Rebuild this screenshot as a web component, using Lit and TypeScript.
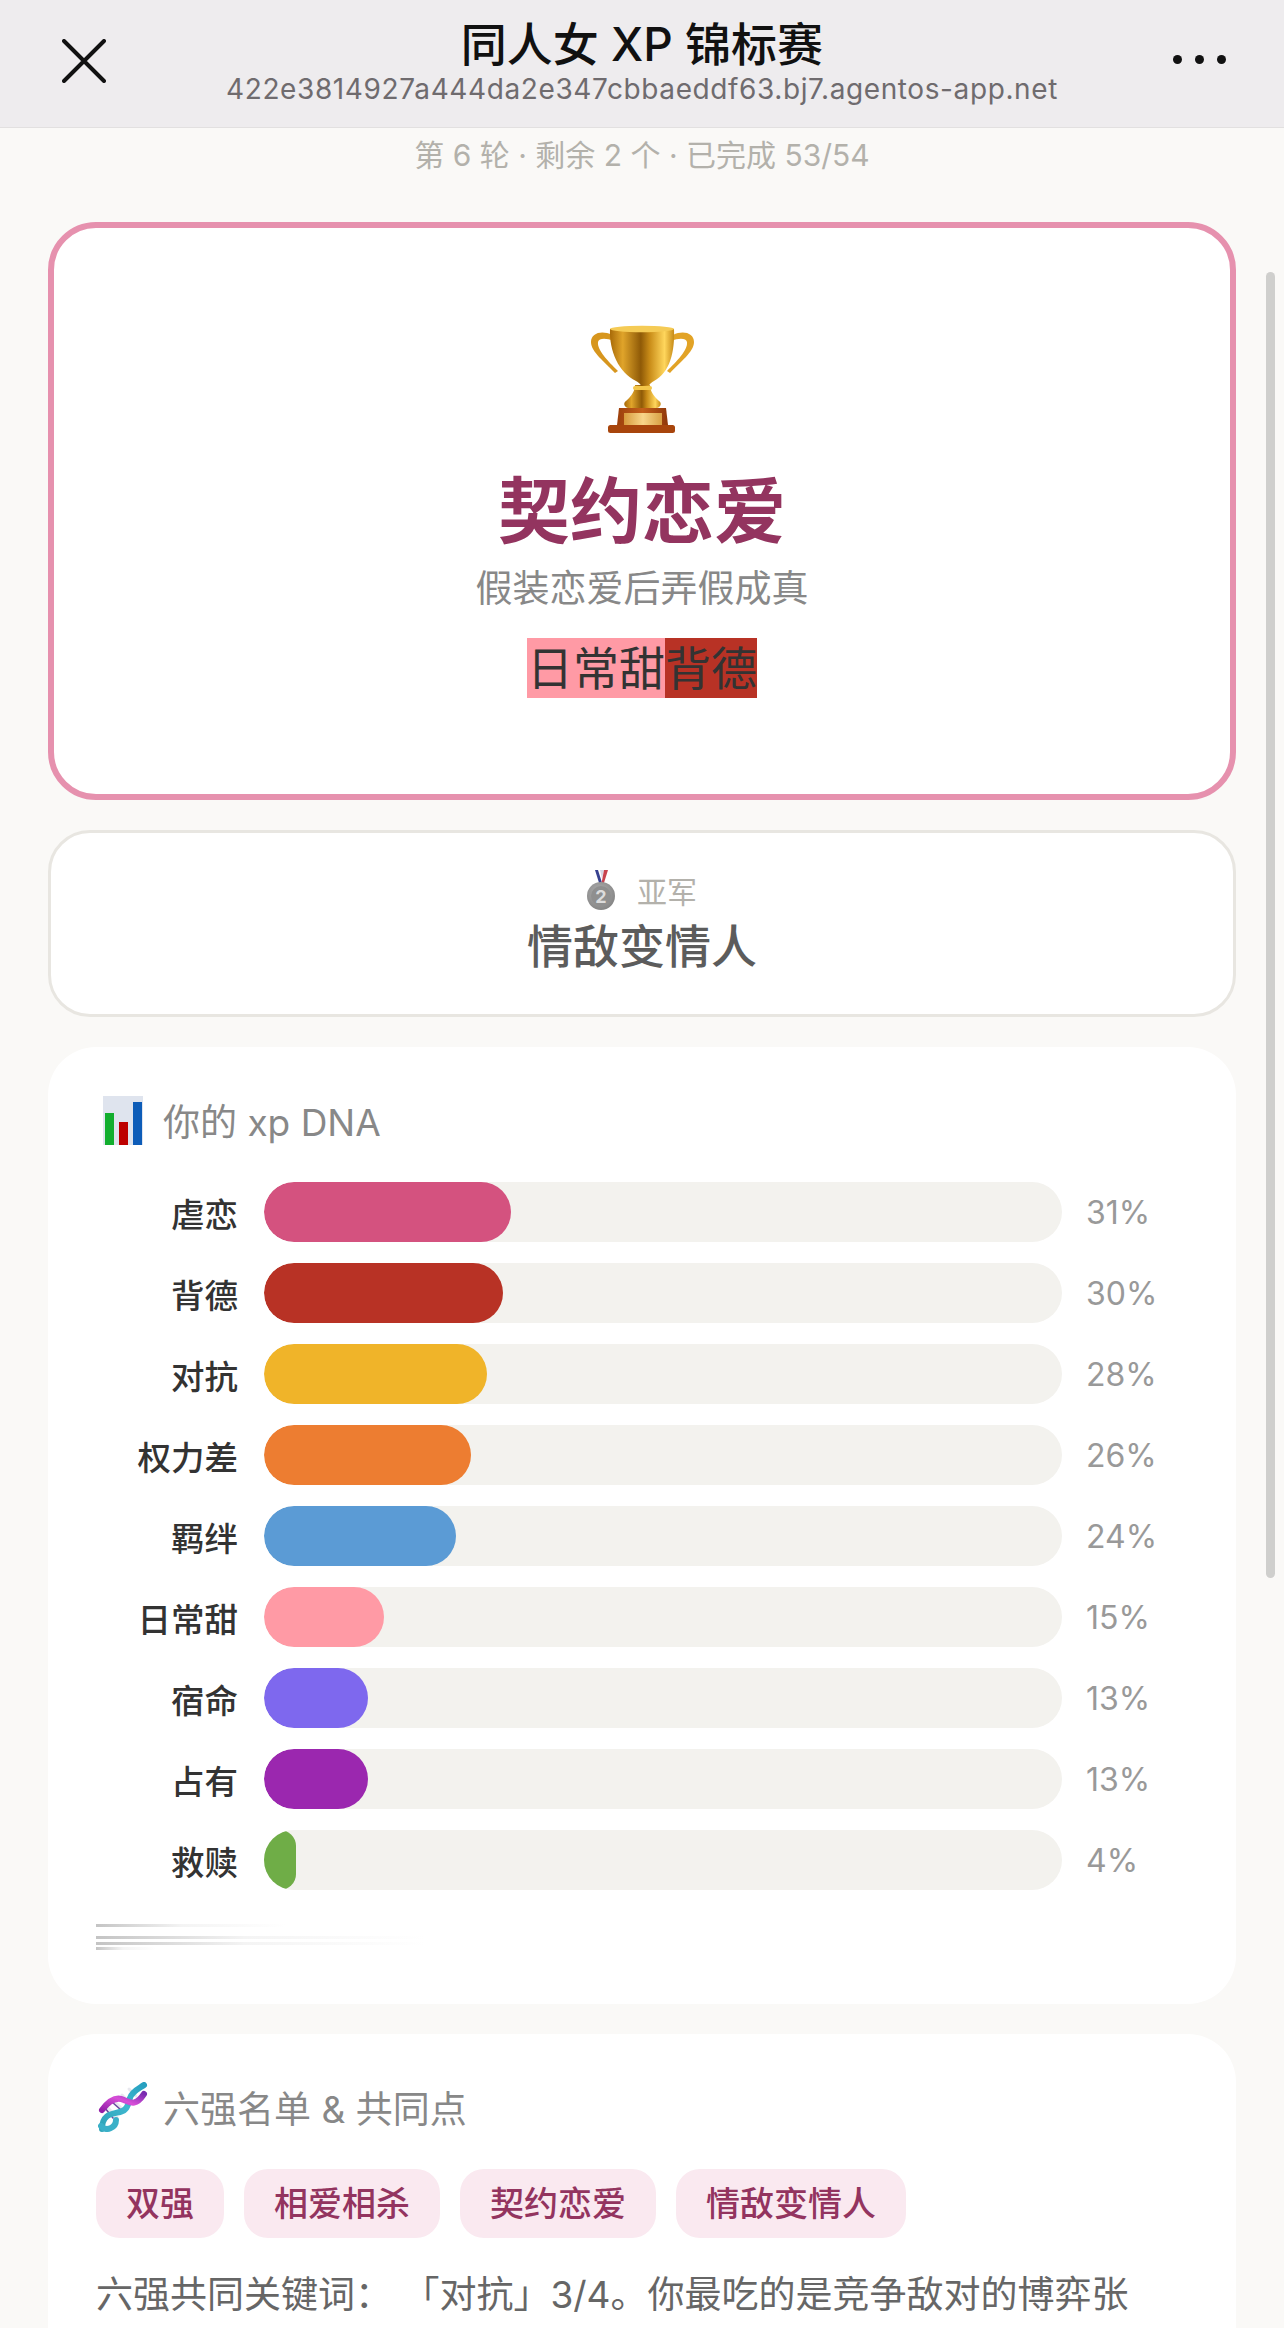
import { LitElement, html, css, svg } from "lit";
import { customElement } from "lit/decorators.js";

const BARS = [
  { label: "虐恋", pct: 31, color: "#d4527f" },
  { label: "背德", pct: 30, color: "#b83225" },
  { label: "对抗", pct: 28, color: "#f0b429" },
  { label: "权力差", pct: 26, color: "#ed7d31" },
  { label: "羁绊", pct: 24, color: "#5b9bd5" },
  { label: "日常甜", pct: 15, color: "#ff9aa5" },
  { label: "宿命", pct: 13, color: "#7e68ee" },
  { label: "占有", pct: 13, color: "#9b27af" },
  { label: "救赎", pct: 4, color: "#6fad47" },
];
const CHIPS = ["双强", "相爱相杀", "契约恋爱", "情敌变情人"];

const trophy = html`<svg class="trophy" viewBox="0 0 105 108" width="105" height="108">
  <defs>
    <linearGradient id="cup" x1="0" x2="1" y1="0" y2="0">
      <stop offset="0" stop-color="#a86a08"/><stop offset=".2" stop-color="#e0a42a"/>
      <stop offset=".48" stop-color="#8f5a07"/><stop offset=".62" stop-color="#c98c18"/>
      <stop offset=".85" stop-color="#ffd65c"/><stop offset="1" stop-color="#c68a17"/>
    </linearGradient>
    <linearGradient id="base" x1="0" x2="1" y1="0" y2="0">
      <stop offset="0" stop-color="#9c3f0c"/><stop offset=".5" stop-color="#c4601a"/><stop offset="1" stop-color="#8f370a"/>
    </linearGradient>
    <linearGradient id="plate" x1="0" x2="1" y1="0" y2="0">
      <stop offset="0" stop-color="#d79a3c"/><stop offset=".5" stop-color="#f8d68a"/><stop offset="1" stop-color="#d8a044"/>
    </linearGradient>
  </defs>
  <path d="M22 10C12 5 1 8 1 17c0 10 14 20 24 31l3-2C18 36 7 25 8 17c1-4 8-4 16-1z" fill="#d7961e"/>
  <path d="M83 10c10-5 21-2 21 7 0 10-14 20-24 31l-3-2c10-10 21-21 20-29-1-4-8-4-16-1z" fill="#e2a326"/>
  <path d="M20 4h64c1 22-4 44-20 52-5 3-5 4-5 6h-8c0-2 0-3-5-6C29 48 19 26 20 4z" fill="url(#cup)"/>
  <ellipse cx="52" cy="4" rx="32" ry="3.2" fill="#f5cb55"/>
  <path d="M45 60h15c0 5 3 11 9 16 3 2 2 6-2 7H38c-4-1-5-5-2-7 6-5 9-11 9-16z" fill="url(#cup)"/>
  <rect x="43" y="61" width="19" height="4" rx="2" fill="#f3c64a"/>
  <path d="M29 83h47l2 17H27z" fill="url(#base)"/>
  <rect x="34" y="88" width="38" height="12" fill="url(#plate)"/>
  <rect x="18" y="100" width="67" height="8" rx="2.5" fill="#a8450c"/>
</svg>`;

const medal = html`<svg class="medal" viewBox="0 0 28 40" width="28" height="40">
  <defs><radialGradient id="silver" cx=".45" cy=".4" r=".7"><stop offset="0" stop-color="#b5b5b5"/><stop offset="1" stop-color="#7d7d7d"/></radialGradient></defs>
  <path d="M8 0l5 16h3L11 0z" fill="#37418f"/>
  <path d="M13 0l2 9 2-9z" fill="#d6d6e4"/>
  <path d="M21 0l-5 16h-2l3-16z" fill="#c8434e"/>
  <circle cx="14" cy="26" r="14" fill="url(#silver)"/>
  <circle cx="14" cy="26" r="10" fill="#8f8f8f"/>
  <text x="14" y="33" text-anchor="middle" class="mtext">2</text>
</svg>`;

const chart = html`<svg viewBox="0 0 40 49" width="40" height="49">
  <rect width="40" height="49" fill="#dfe4ee"/>
  <rect x="2" y="17" width="9" height="32" fill="#12ae2e"/>
  <rect x="16" y="26" width="9" height="23" fill="#bd0000"/>
  <rect x="30" y="6" width="9" height="43" fill="#0d5cb8"/>
</svg>`;

const dna = html`<svg viewBox="0 0 50 50" width="50" height="50">
  <defs>
    <linearGradient id="d1" x1="0" x2="1" y1="1" y2="0"><stop offset="0" stop-color="#2ea4b8"/><stop offset=".55" stop-color="#3fb7cf"/><stop offset="1" stop-color="#27a0c0"/></linearGradient>
    <linearGradient id="d2" x1="0" x2="1" y1="1" y2="0"><stop offset="0" stop-color="#9420a8"/><stop offset=".55" stop-color="#d84fd8"/><stop offset="1" stop-color="#7a2cb0"/></linearGradient>
  </defs>
  ${svg`<g stroke-linecap="round">
    <path d="M10 26l9 9M16 19l9 9M24 13l8 8M31 7l7 7" stroke="#e8e8ee" stroke-width="3"/>
    <path d="M7 26l8 10M14 20l9 8" stroke="#6a4aa0" stroke-width="1.6"/>
    <path d="M4 47C4 32 14 32 22 30 30 28 30 22 32 16 34 9 42 6 46 3" fill="none" stroke="url(#d1)" stroke-width="6"/>
    <path d="M4 28C10 20 18 14 26 18 33 21 38 24 46 12" fill="none" stroke="url(#d2)" stroke-width="6"/>
    <path d="M3 44C8 50 18 46 18 38" fill="none" stroke="#3ab0c8" stroke-width="6"/>
  </g>`}
</svg>`;

@customElement("app-root")
export class AppRoot extends LitElement {
  static styles = css`
    :host {
      display: block;
      position: relative;
      width: 1284px;
      height: 2328px;
      overflow: hidden;
      background: #faf9f7;
      font-family: Inter, "Noto Sans CJK SC", sans-serif;
      color: #333;
    }
    .nav {
      display: grid;
      grid-template-columns: 1fr auto 1fr;
      height: 127px;
      box-sizing: content-box;
      background: #eeecee;
      border-bottom: 1px solid #e2e0e0;
    }
    .close { padding: 39px 0 0 62px; }
    .more { display: flex; justify-content: flex-end; gap: 13px; padding: 55px 58px 0 0; }
    .dot { width: 9px; height: 9px; border-radius: 50%; background: #111; }
    .titles { text-align: center; padding-top: 16px; }
    .title { font-size: 46px; line-height: 56px; font-weight: 500; color: #111; }
    .url { font-size: 28px; line-height: 34px; color: #6f6b6e; letter-spacing: 0.6px; white-space: nowrap; }
    .status {
      text-align: center;
      font-size: 30px;
      line-height: 42px;
      padding-top: 6px;
      color: #b3b1ab;
      margin-bottom: 46px;
    }
    main { display: flex; flex-direction: column; gap: 30px; padding: 0 48px; }
    .hero {
      box-sizing: border-box;
      height: 578px;
      background: #fff;
      border: 6px solid #e691ae;
      border-radius: 48px;
      display: flex;
      flex-direction: column;
      align-items: center;
      padding-top: 97px;
    }
    .trophy { display: block; }
    .champ { font-size: 72px; line-height: 86px; font-weight: 700; color: #93345f; margin-top: 35px; }
    .desc { font-size: 37px; line-height: 50px; color: #888; margin-top: 10px; }
    .tags { display: flex; margin-top: 24px; font-size: 46px; line-height: 60px; color: #333; }
    .tag-a { background: #ff9aa5; }
    .tag-b { background: #b83225; }
    .runner {
      box-sizing: border-box;
      height: 187px;
      background: #fff;
      border: 3px solid #e8e6e1;
      border-radius: 42px;
      display: flex;
      flex-direction: column;
      align-items: center;
      padding-top: 37px;
    }
    .runner-top { display: flex; align-items: center; gap: 22px; height: 40px; font-size: 30px; color: #b3b1ab; }
    .medal { display: block; }
    .mtext { font: 700 18px Inter, sans-serif; fill: #dcdcdc; }
    .runner-name { font-size: 46px; line-height: 62px; font-weight: 500; color: #5c5c5c; margin-top: 5px; }
    .card { background: #fff; border-radius: 48px; padding: 48px; }
    .card.dna { box-sizing: border-box; height: 957px; }
    .heading { display: flex; align-items: center; gap: 13px; height: 50px; font-size: 37px; color: #888; margin-bottom: 37px; }
    .heading .ico { width: 54px; display: flex; justify-content: center; }
    .rows { display: flex; flex-direction: column; gap: 21px; }
    .row { display: grid; grid-template-columns: 142px 798px 1fr; column-gap: 26px; align-items: center; height: 60px; }
    .label { text-align: right; font-size: 33.5px; font-weight: 500; color: #333; }
    .track { height: 60px; background: #f3f2ee; border-radius: 30px; overflow: hidden; }
    .fill { height: 100%; border-radius: 30px; }
    .pct { font-size: 32px; color: #999; margin-left: -2px; }
    .fade { display: flex; flex-direction: column; margin-top: 34px; }
    .fade i { display: block; height: 3px; background: linear-gradient(90deg, #c4c4c4, #f4f4f4 45%, #fff); }
    .fade i:nth-child(1) { width: 190px; margin-bottom: 9px; }
    .fade i:nth-child(2) { width: 330px; margin-bottom: 3px; }
    .fade i:nth-child(3) { width: 330px; margin-bottom: 2px; }
    .fade i:nth-child(4) { width: 60px; }
    .chips { display: flex; gap: 20px; }
    .chip { height: 69px; line-height: 69px; padding: 0 30px; border-radius: 24px; background: #fae9f0; color: #93345f; font-size: 34px; font-weight: 500; }
    .note { margin-top: 27px; font-size: 37px; line-height: 60px; color: #666; white-space: nowrap; }
    .scrollbar { position: absolute; left: 1266px; top: 272px; width: 9px; height: 1306px; border-radius: 5px; background: #cfcfcd; }
  `;

  render() {
    return html`
      <header class="nav">
        <div class="close">
          <svg viewBox="0 0 44 44" width="44" height="44"><path d="M2 2l40 40M42 2L2 42" stroke="#111" stroke-width="4" stroke-linecap="round"/></svg>
        </div>
        <div class="titles">
          <div class="title">同人女 XP 锦标赛</div>
          <div class="url">422e3814927a444da2e347cbbaeddf63.bj7.agentos-app.net</div>
        </div>
        <div class="more"><span class="dot"></span><span class="dot"></span><span class="dot"></span></div>
      </header>
      <div class="status">第 6 轮 · 剩余 2 个 · 已完成 53/54</div>
      <main>
        <section class="hero">
          ${trophy}
          <div class="champ">契约恋爱</div>
          <div class="desc">假装恋爱后弄假成真</div>
          <div class="tags"><span class="tag-a">日常甜</span><span class="tag-b">背德</span></div>
        </section>
        <section class="runner">
          <div class="runner-top">${medal}<span>亚军</span></div>
          <div class="runner-name">情敌变情人</div>
        </section>
        <section class="card dna">
          <div class="heading"><span class="ico">${chart}</span><span>你的 xp DNA</span></div>
          <div class="rows">
            ${BARS.map(
              (b) => html`<div class="row">
                <span class="label">${b.label}</span>
                <div class="track"><div class="fill" style="width:${b.pct}%;background:${b.color}"></div></div>
                <span class="pct">${b.pct}%</span>
              </div>`
            )}
          </div>
          <div class="fade"><i></i><i></i><i></i><i></i></div>
        </section>
        <section class="card">
          <div class="heading"><span class="ico">${dna}</span><span>六强名单 &amp; 共同点</span></div>
          <div class="chips">${CHIPS.map((c) => html`<span class="chip">${c}</span>`)}</div>
          <div class="note">六强共同关键词： 「对抗」3/4。你最吃的是竞争敌对的博弈张</div>
        </section>
      </main>
      <div class="scrollbar"></div>
    `;
  }
}
